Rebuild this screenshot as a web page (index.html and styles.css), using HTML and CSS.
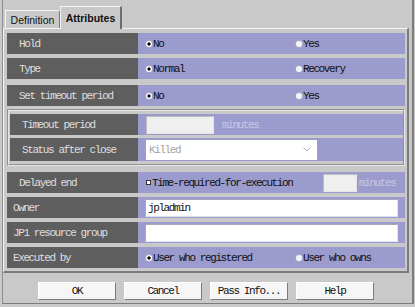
FILE: index.html
```html
<!DOCTYPE html>
<html lang="en">
<head>
    <meta charset="UTF-8">
    <title>Attributes</title>
    <link rel="stylesheet" href="styles.css">
</head>
<body>
    <div class="window">
        <div class="tabs">
            <div class="tab">Definition</div>
            <div class="tab active">Attributes</div>
        </div>

        <div class="panel">
            <div class="row">
                <div class="label">Hold</div>
                <div class="value">
                    <span class="option"><span class="radio on"></span>No</span>
                    <span class="option"><span class="radio"></span>Yes</span>
                </div>
            </div>
            <div class="row gap-4">
                <div class="label">Type</div>
                <div class="value">
                    <span class="option"><span class="radio on"></span>Normal</span>
                    <span class="option"><span class="radio"></span>Recovery</span>
                </div>
            </div>
            <div class="row gap-6">
                <div class="label">Set timeout period</div>
                <div class="value">
                    <span class="option"><span class="radio on"></span>No</span>
                    <span class="option"><span class="radio"></span>Yes</span>
                </div>
            </div>

            <div class="group">
                <div class="row">
                    <div class="label">Timeout period</div>
                    <div class="value">
                        <span class="box disabled timeout"></span>
                        <span class="unit">minutes</span>
                    </div>
                </div>
                <div class="row status">
                    <div class="label">Status after close</div>
                    <div class="value">
                        <span class="select">
                            <span>Killed</span>
                            <svg width="8" height="5" viewBox="0 0 8 5"><polyline points="0.5,0.5 4,4 7.5,0.5" fill="none" stroke="#b4b4b4" stroke-width="1"/></svg>
                        </span>
                    </div>
                </div>
            </div>

            <div class="row gap-6">
                <div class="label">Delayed end</div>
                <div class="value">
                    <span class="check-option"><span class="check"></span>Time-required-for-execution</span>
                    <span class="box disabled delay"></span>
                    <span class="unit near">minutes</span>
                </div>
            </div>
            <div class="row gap-4">
                <div class="label short">Owner</div>
                <div class="value tight">
                    <span class="box text">jpladmin</span>
                </div>
            </div>
            <div class="row gap-4">
                <div class="label short">JP1 resource group</div>
                <div class="value tight">
                    <span class="box text"></span>
                </div>
            </div>
            <div class="row gap-4">
                <div class="label short">Executed by</div>
                <div class="value">
                    <span class="option"><span class="radio on"></span>User who registered</span>
                    <span class="option"><span class="radio"></span>User who owns</span>
                </div>
            </div>
        </div>

        <div class="buttons">
            <button class="button">OK</button>
            <button class="button">Cancel</button>
            <button class="button">Pass Info...</button>
            <button class="button">Help</button>
        </div>
    </div>
</body>
</html>
```

FILE: styles.css
```css
* {
    margin: 0;
    padding: 0;
    box-sizing: border-box;
}

body {
    background: #c9c9c9;
    font-family: "Liberation Mono", "DejaVu Sans Mono", monospace;
    font-size: 11px;
    letter-spacing: -1.4px;
    color: #111;
}

.window {
    margin-left: 2px;
    width: 412px;
    height: 304px;
    border-left: 1px solid #8e8e8e;
    border-right: 2px solid #7c7c7c;
    border-bottom: 1px solid #7c7c7c;
}

/* tabs */
.tabs {
    display: flex;
    align-items: flex-end;
    height: 28px;
    padding-left: 2px;
}

.tab {
    width: 55px;
    height: 18px;
    display: flex;
    align-items: center;
    justify-content: center;
    padding-top: 1px;
    font-family: "Liberation Sans", Arial, sans-serif;
    font-size: 10.5px;
    letter-spacing: 0;
    color: #111;
    background: #c9c9c9;
    border-top: 1px solid #f4f4f4;
    border-left: 1px solid #f4f4f4;
    border-right: 1px solid #7c7c7c;
}

.tab.active {
    width: 62px;
    height: 23px;
    margin-bottom: -1px;
    padding-top: 0;
    font-weight: bold;
    border-right: 2px solid #6e6e6e;
    position: relative;
    z-index: 1;
}

/* panel */
.panel {
    width: 406px;
    height: 245px;
    padding: 4px 2px 3px 3px;
    border-top: 1px solid #f4f4f4;
    border-left: 1px solid #f4f4f4;
    border-right: 2px solid #7c7c7c;
    border-bottom: 2px solid #7c7c7c;
}

.row {
    display: grid;
    grid-template-columns: 131px 1fr;
    height: 21px;
}

.gap-4 { margin-top: 4px; }
.gap-6 { margin-top: 6px; }

.label {
    display: flex;
    align-items: center;
    padding-left: 12px;
    background: #5e5e5e;
    color: #dedede;
    white-space: nowrap;
}

.label.short {
    padding-left: 6px;
}

.value {
    display: flex;
    align-items: center;
    padding-left: 8px;
    background: #9b9bcd;
    white-space: nowrap;
}

.value.tight {
    padding-left: 7px;
}

.option {
    display: flex;
    align-items: center;
    width: 150px;
}

.option + .option {
    width: auto;
}

.radio {
    width: 6px;
    height: 6px;
    margin-right: 1px;
    border-radius: 50%;
    background: #f4f4f4;
    box-shadow: 0 0 0 0.5px #b8b8c8;
}

.radio.on {
    background: radial-gradient(circle, #000 1.3px, #fff 1.9px);
}

/* timeout group */
.group {
    margin-top: 3px;
    height: 57px;
    padding: 3px 0 3px 1px;
    border: 2px groove #e6e6e6;
}

.group .row {
    grid-template-columns: 128px 1fr;
}

.group .row.status {
    height: 23px;
    margin-top: 3px;
}

.box {
    display: inline-block;
    height: 18px;
    background: #fff;
    border: 1px solid #c0c0d0;
}

.box.disabled {
    background: #efefef;
    border-color: #bdbdbd #e4e4e4 #e4e4e4 #bdbdbd;
}

.box.timeout {
    width: 68px;
}

.box.delay {
    width: 34px;
}

.box.text {
    width: 253px;
    padding-left: 2px;
    line-height: 16px;
    border-color: #a8a8b8 #e0e0ee #e0e0ee #a8a8b8;
}

.unit {
    margin-left: 8px;
    color: #c8c8e2;
}

.unit.near {
    margin-left: 2px;
}

.select {
    display: flex;
    align-items: center;
    justify-content: space-between;
    width: 171px;
    height: 20px;
    padding: 0 6px 0 3px;
    background: #fff;
    color: #a4a4a4;
}

.check-option {
    display: flex;
    align-items: center;
    width: 177px;
}

.check {
    width: 5px;
    height: 5px;
    margin-right: 1px;
    background: #fff;
    border: 1px solid #333;
}

/* buttons */
.buttons {
    display: flex;
    gap: 8px;
    margin-top: 9px;
    padding-left: 35px;
}

.button {
    width: 78px;
    height: 18px;
    font: inherit;
    letter-spacing: -1.4px;
    color: #111;
    background: #f6f6f6;
    border: 1px solid;
    border-color: #ffffff #7c7c7c #7c7c7c #ffffff;
}
```
